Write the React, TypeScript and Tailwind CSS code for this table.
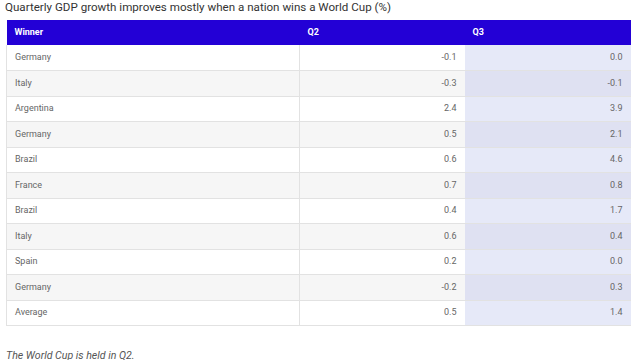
import React from "react";

const rows: [string, string, string][] = [
  ["Germany", "-0.1", "0.0"],
  ["Italy", "-0.3", "-0.1"],
  ["Argentina", "2.4", "3.9"],
  ["Germany", "0.5", "2.1"],
  ["Brazil", "0.6", "4.6"],
  ["France", "0.7", "0.8"],
  ["Brazil", "0.4", "1.7"],
  ["Italy", "0.6", "0.4"],
  ["Spain", "0.2", "0.0"],
  ["Germany", "-0.2", "0.3"],
  ["Average", "0.5", "1.4"],
];

export default function App() {
  return (
    <div className="w-[640px] h-[360px] overflow-hidden bg-white font-['Roboto',sans-serif]">
      <div className="pl-[5px] text-[11.6px] leading-[14px] text-[#333] h-[20px]">
        Quarterly GDP growth improves mostly when a nation wins a World Cup (%)
      </div>
      <table className="ml-[6px] w-[624px] border-collapse table-fixed text-[9px]">
        <colgroup>
          <col className="w-[293px]" />
          <col className="w-[165px]" />
          <col className="w-[166px]" />
        </colgroup>
        <thead>
          <tr className="h-[25px] bg-[#2300d6] text-white font-bold">
            <th className="text-left pl-[8px]">Winner</th>
            <th className="text-left pl-[8px]">Q2</th>
            <th className="text-left pl-[8px]">Q3</th>
          </tr>
        </thead>
        <tbody>
          {rows.map((r, i) => {
            const gray = i % 2 === 1;
            return (
              <tr
                key={i}
                className={`h-[25.5px] border-b border-[#e2e2e2] text-[#666] ${gray ? "bg-[#f6f6f6]" : "bg-white"}`}
              >
                <td className="pl-[8px] border-l border-[#e2e2e2]">{r[0]}</td>
                <td className="text-right pr-[8px] border-l border-[#e2e2e2]">{r[1]}</td>
                <td className={`text-right pr-[8px] ${gray ? "bg-[#dfe1f2]" : "bg-[#e6e9f8]"}`}>{r[2]}</td>
              </tr>
            );
          })}
        </tbody>
      </table>
      <div className="pl-[6px] mt-[23px] italic text-[10.6px] leading-[14px] text-[#555]">The World Cup is held in Q2.</div>
    </div>
  );
}
